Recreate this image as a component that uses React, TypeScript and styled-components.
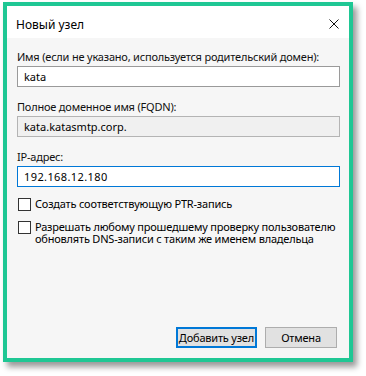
import styled, { createGlobalStyle } from 'styled-components';

const GlobalStyle = createGlobalStyle`
  html, body {
    margin: 0;
    padding: 0;
    background: #ffffff;
  }
  body {
    font-family: "Noto Sans", "Open Sans", sans-serif;
    font-size: 11px;
    color: #000;
  }
`

const Page = styled.div`
  width: 366px;
  height: 376px;
  padding: 2px 0 0 3px;
  box-sizing: border-box;
`
const Frame = styled.div`
  width: 350px;
  height: 360px;
  box-sizing: border-box;
  border: 4px solid #1fc794;
  box-shadow: 4px 5px 6px rgba(0, 0, 0, 0.4);
  display: flex;
  flex-direction: column;
  background: #f6f6f6;
`
const TitleBar = styled.div`
  height: 32px;
  background: #ffffff;
  display: flex;
  align-items: center;
  justify-content: space-between;
  padding: 4px 10px 0 9px;
  box-sizing: border-box;
`
const Title = styled.span`
  font-size: 12px;
`
const CloseButton = styled.button`
  border: none;
  background: none;
  padding: 0;
  width: 10px;
  height: 10px;
  display: flex;
  cursor: pointer;
`
const Body = styled.div`
  flex: 1;
  display: flex;
  flex-direction: column;
  padding: 12px 9px 10px 10px;
  letter-spacing: -0.2px;
`
const Field = styled.div`
  display: flex;
  flex-direction: column;
  gap: 2px;
  margin-bottom: 13px;
`
const Label = styled.label`
  line-height: 14px;
  color: #111;
  white-space: nowrap;
`
const Input = styled.input<{ $focused?: boolean; $readOnly?: boolean }>`
  height: 21px;
  box-sizing: border-box;
  border: 1px solid ${p => (p.$focused ? '#0078d7' : p.$readOnly ? '#b4b4b4' : '#9a9a9a')};
  background: ${p => (p.$readOnly ? '#f0f0f0' : '#ffffff')};
  font-family: inherit;
  font-size: 11px;
  letter-spacing: ${p => (p.$focused ? '0.4px' : '0')};
  padding: 0 6px;
  color: #000;
  outline: none;
  width: 100%;
`
const CheckRow = styled.label`
  display: flex;
  align-items: flex-start;
  gap: 4px;
  line-height: 12px;
  margin: 0 0 10px 1px;
  &:first-of-type {
    margin-top: -2px;
  }
`
const Box = styled.span`
  flex: none;
  width: 13px;
  height: 13px;
  box-sizing: border-box;
  border: 1px solid #333;
  background: #fff;
`
const CheckText = styled.span`
  white-space: nowrap;
`
const Footer = styled.div`
  margin-top: auto;
  display: flex;
  justify-content: flex-end;
  gap: 8px;
  padding-right: 3px;
`
const Button = styled.button<{ $primary?: boolean }>`
  height: 21px;
  box-sizing: border-box;
  min-width: 72px;
  padding: 0 1px;
  font-family: inherit;
  font-size: 11px;
  letter-spacing: -0.2px;
  color: #000;
  background: #e1e1e1;
  border: ${p => (p.$primary ? '2px solid #0078d7' : '1px solid #adadad')};
  cursor: pointer;
`

export default function App() {
  return (
    <Page>
      <GlobalStyle />
      <Frame>
        <TitleBar>
          <Title>Новый узел</Title>
          <CloseButton aria-label="Закрыть">
            <svg width="10" height="10" viewBox="0 0 10 10">
              <path d="M0.5 0.5 L9.5 9.5 M9.5 0.5 L0.5 9.5" stroke="#111" strokeWidth="1" />
            </svg>
          </CloseButton>
        </TitleBar>
        <Body>
          <Field>
            <Label>Имя (если не указано, используется родительский домен):</Label>
            <Input defaultValue="kata" />
          </Field>
          <Field>
            <Label>Полное доменное имя (FQDN):</Label>
            <Input $readOnly readOnly defaultValue="kata.katasmtp.corp." />
          </Field>
          <Field>
            <Label>IP-адрес:</Label>
            <Input $focused defaultValue="192.168.12.180" />
          </Field>
          <CheckRow>
            <Box />
            <CheckText>Создать соответствующую PTR-запись</CheckText>
          </CheckRow>
          <CheckRow>
            <Box />
            <CheckText>
              Разрешать любому прошедшему проверку пользователю
              <br />
              обновлять DNS-записи с таким же именем владельца
            </CheckText>
          </CheckRow>
          <Footer>
            <Button $primary>Добавить узел</Button>
            <Button>Отмена</Button>
          </Footer>
        </Body>
      </Frame>
    </Page>
  );
}
